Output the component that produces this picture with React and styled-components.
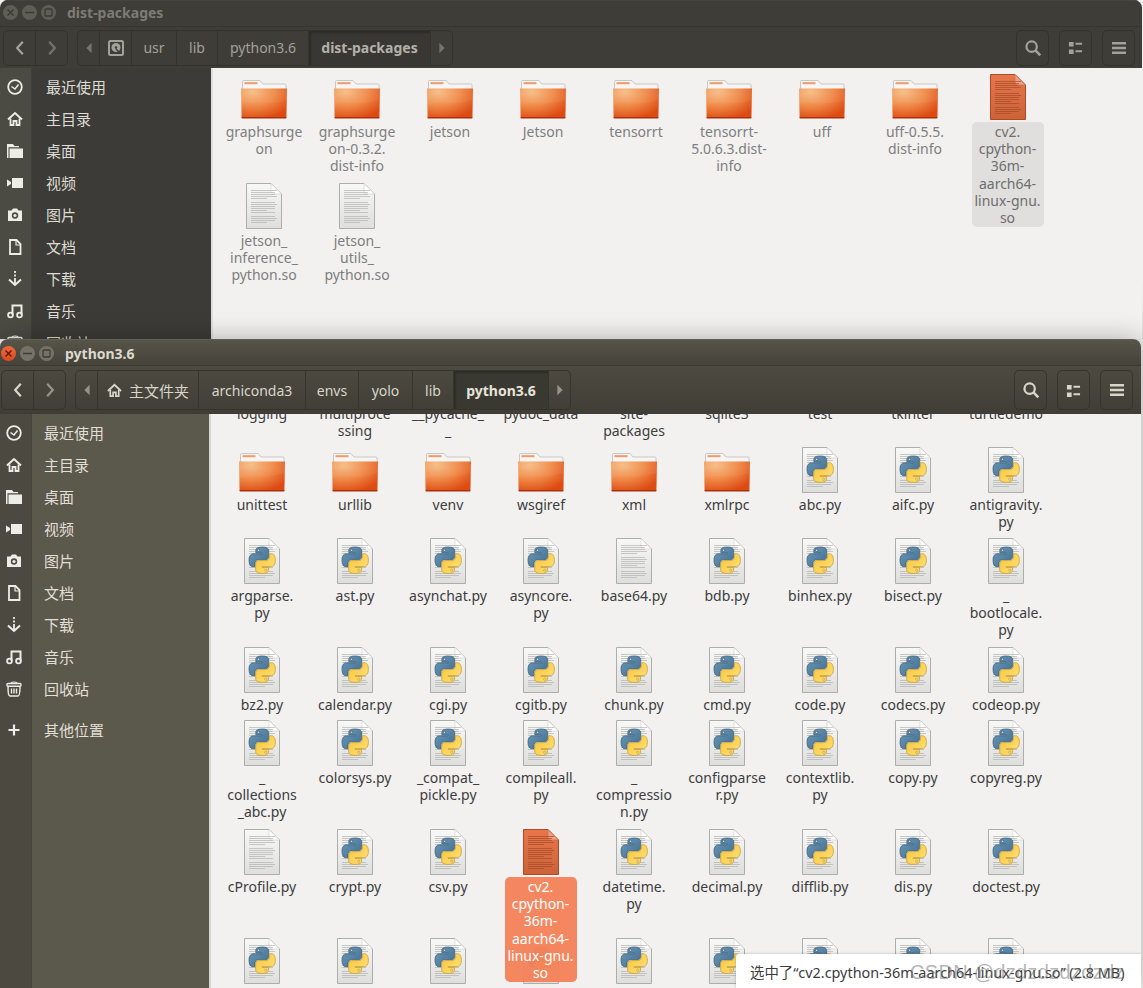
import React from 'react';
import styled, { createGlobalStyle } from 'styled-components';

const GlobalStyle = createGlobalStyle`
  html, body {
    margin: 0;
    padding: 0;
    background: #e6e6e4;
  }
  * {
    box-sizing: border-box;
  }
`;

const FONT = `"Noto Sans", "Noto Sans CJK SC", sans-serif`;

// ============================================
// STYLED COMPONENTS
// ============================================

const Desktop = styled.div`
  width: 1143px;
  height: 988px;
  overflow: hidden;
  display: flex;
  flex-direction: column;
  position: relative;
  font-family: ${FONT};
  background: linear-gradient(#f2f1f0 0, #f2f1f0 280px, #dcdcda 339px, #f0f0ee 340px);
`;

const Window = styled.div`
  display: flex;
  flex-direction: column;
  position: relative;
  overflow: hidden;
  width: ${(p) => (p.$active ? '1141px' : '1142px')};
  height: ${(p) => (p.$active ? '649px' : '339px')};
  flex: none;
  border-radius: 8px 8px 0 0;
  background: #f2f1f0;
  box-shadow: ${(p) => (p.$active ? '0 0 26px rgba(0, 0, 0, 0.28)' : 'none')};
`;

const TitleBar = styled.div`
  height: 26px;
  flex: none;
  display: flex;
  align-items: center;
  padding: ${(p) => (p.$active ? '2px 0 0 1px' : '0 0 3px 3px')};
  background: ${(p) => (p.$active ? 'linear-gradient(#575449, #45433a)' : '#3e3d38')};
  border-top: 1px solid ${(p) => (p.$active ? '#625f53' : '#45443f')};
`;

const WinButtons = styled.div`
  display: flex;
  gap: 4px;
  width: 64px;
`;

const WinButton = styled.div`
  width: 15px;
  height: 15px;
  border-radius: 50%;
  display: flex;
  align-items: center;
  justify-content: center;
  background: ${(p) => (p.$close ? 'linear-gradient(#f0693a, #dc4a20)' : p.$active ? '#75726a' : '#5e5d56')};
  color: ${(p) => (p.$close ? '#5c1c08' : p.$active ? '#3f3d36' : '#3a3935')};
`;

const Title = styled.div`
  font-size: 14px;
  font-weight: 700;
  color: ${(p) => (p.$active ? '#dcd9cf' : '#7d7c74')};
`;

const Toolbar = styled.div`
  height: ${(p) => (p.$active ? '49px' : '42px')};
  flex: none;
  display: flex;
  align-items: center;
  padding: ${(p) => (p.$active ? '0 8px 0 1px' : '0 7px 0 3px')};
  background: ${(p) => (p.$active ? 'linear-gradient(#4d4b41, #3f3d35)' : '#3e3d38')};
  border-top: 1px solid ${(p) => (p.$active ? '#3b3a32' : '#36352f')};
  color: ${(p) => (p.$active ? '#d8d5cb' : '#a3a199')};
`;

const Group = styled.div`
  display: flex;
  align-items: stretch;
  height: ${(p) => (p.$active ? '40px' : '36px')};
  border: 1px solid ${(p) => (p.$active ? '#35342d' : '#33322d')};
  border-radius: 5px;
  overflow: hidden;
  margin-left: ${(p) => p.$gap || 0}px;
`;

const Crumb = styled.div`
  width: ${(p) => p.$w}px;
  display: flex;
  align-items: center;
  justify-content: center;
  gap: 7px;
  font-size: 14px;
  white-space: nowrap;
  font-weight: ${(p) => (p.$current ? 700 : 400)};
  color: ${(p) => (p.$current ? (p.$active ? '#e6e3da' : '#b4b2a9') : 'inherit')};
  background: ${(p) => (p.$current ? (p.$active ? '#3a3931' : '#383733') : 'transparent')};
  border-left: ${(p) => (p.$first ? 'none' : `1px solid ${p.$active ? '#35342d' : '#33322d'}`)};
  box-shadow: ${(p) => (p.$current ? 'inset 2px 2px 2px rgba(0, 0, 0, 0.22)' : 'none')};

  svg {
    opacity: ${(p) => (p.$dim ? 0.55 : 1)};
  }
`;

const HomeLabel = styled.span`
  font-size: 15px;
`;

const Spacer = styled.div`
  flex: 1;
`;

const Body = styled.div`
  flex: 1;
  min-height: 0;
  display: flex;
`;

const Sidebar = styled.div`
  width: ${(p) => (p.$active ? '211px' : '213px')};
  flex: none;
  padding-top: 3px;
  background: linear-gradient(90deg,
    ${(p) => (p.$active ? '#4c4a40' : '#4b4a43')} 0, ${(p) => (p.$active ? '#4c4a40' : '#4b4a43')} 31px,
    ${(p) => (p.$active ? '#45433a' : '#403f3a')} 31px, ${(p) => (p.$active ? '#45433a' : '#403f3a')} 32px,
    ${(p) => (p.$active ? '#5b584c' : '#3c3b37')} 32px);
  border-right: 2px solid ${(p) => (p.$active ? '#d6d5d2' : '#e0dfdd')};
`;

const Place = styled.div`
  height: 32px;
  display: flex;
  align-items: center;
  margin-top: ${(p) => (p.$other ? '9px' : 0)};
`;

const PlaceIcon = styled.div`
  width: 32px;
  display: flex;
  justify-content: center;
  padding-right: ${(p) => (p.$active ? '4px' : '3px')};
  color: #eeece6;
`;

const PlaceName = styled.div`
  margin: -2px 0 0 ${(p) => (p.$active ? '12px' : '14px')};
  font-size: 15px;
  color: ${(p) => (p.$active ? '#e2dfd6' : '#dddbd3')};
`;

const Content = styled.div`
  flex: 1;
  min-width: 0;
  overflow: hidden;
  position: relative;
`;

const FileGrid = styled.div`
  display: grid;
  grid-template-columns: repeat(9, 93px);
  align-items: start;
  padding-left: 4.5px;
  margin-top: ${(p) => p.$scroll}px;
`;

const FileItem = styled.div`
  position: relative;
  display: flex;
  flex-direction: column;
  align-items: center;
  padding-bottom: ${(p) => 4 + p.$lines}px;
  min-height: ${(p) => (p.$selected ? '109px' : 0)};
`;

const IconBox = styled.div`
  height: 48px;
  display: flex;
  align-items: flex-end;
  justify-content: center;
`;

const FileName = styled.div`
  width: 78px;
  margin-top: 3px;
  font-size: 14px;
  line-height: 17px;
  text-align: center;
  white-space: pre-line;
  color: ${(p) => (p.$active ? '#3d3d3d' : '#7e7e7e')};
`;

const SelectedName = styled.div`
  position: absolute;
  z-index: 2;
  top: 50px;
  left: 10px;
  width: 72px;
  height: 105px;
  padding-top: 1px;
  border-radius: 5px;
  font-size: 14px;
  line-height: 17.2px;
  text-align: center;
  white-space: pre-line;
  color: ${(p) => (p.$active ? '#ffffff' : '#6e6e6e')};
  background: ${(p) => (p.$active ? 'rgba(244, 130, 88, 0.96)' : '#e0dfdd')};
`;

const Toast = styled.div`
  position: absolute;
  z-index: 3;
  right: 0;
  bottom: 0;
  width: 405px;
  height: 34px;
  padding-left: 14px;
  display: flex;
  align-items: center;
  font-size: 14.4px;
  white-space: nowrap;
  color: #3c3c3c;
  background: #ffffff;
  border-top-left-radius: 3px;
  box-shadow: 0 0 3px rgba(0, 0, 0, 0.25);
`;

const Watermark = styled.div`
  position: absolute;
  z-index: 4;
  left: 910px;
  top: 959px;
  font-family: "Liberation Sans", sans-serif;
  font-size: 20px;
  letter-spacing: 0.3px;
  line-height: 26px;
  white-space: nowrap;
  color: rgba(110, 110, 110, 0.5);
`;

// ============================================
// ICONS
// ============================================

const Stroke = ({ size = 16, width = 2, children }) => (
  <svg width={size} height={size} viewBox="0 0 16 16" fill="none" stroke="currentColor" strokeWidth={width}>
    {children}
  </svg>
);

const Fill = ({ size = 16, children }) => (
  <svg width={size} height={size} viewBox="0 0 16 16" fill="currentColor">
    {children}
  </svg>
);

const ChevronLeft = () => <Stroke size={18}><path d="M10.5 2.5 5.5 8l5 5.500" /></Stroke>;
const ChevronRight = () => <Stroke size={18}><path d="M5.5 2.500 10.500 8l-5 5.500" /></Stroke>;
const ArrowLeft = () => <Fill size={14}><path d="M11 2v12L5 8z" /></Fill>;
const ArrowRight = () => <Fill size={14}><path d="M5 2v12l6-6z" /></Fill>;

const Disk = () => (
  <svg width="16" height="16" viewBox="0 0 16 16">
    <rect x="1" y="1" width="14" height="14" rx="1.500" fill="none" stroke="currentColor" strokeWidth="2" />
    <circle cx="8" cy="7.500" r="4.500" fill="currentColor" />
    <circle cx="8" cy="7.500" r="1.300" fill="#3e3d38" />
    <path d="m8 9 4 4" stroke="#3e3d38" strokeWidth="1.500" />
  </svg>
);

const Home = ({ size = 16 }) => (
  <svg width={size} height={size} viewBox="0 0 16 16" fill="none" stroke="currentColor" strokeWidth="2">
    <path d="M1 8.500 8 2l7 6.500" />
    <path d="M3.500 7.500V14h3v-4h3v4h3V7.500" strokeWidth="1.800" />
  </svg>
);

const Search = () => (
  <Stroke size={18} width={2}>
    <circle cx="6.800" cy="6.800" r="4.600" />
    <path d="m10.200 10.200 4.300 4.300" strokeWidth="2.200" />
  </Stroke>
);

const ListView = () => (
  <Fill size={15}>
    <path d="M1 2h5v5H1zM1 10h5v5H1zM8 3h7v2H8zM8 11h7v2H8z" />
  </Fill>
);

const Menu = () => (
  <Fill size={16}>
    <path d="M1 2h14v2.500H1zM1 6.800h14v2.500H1zM1 11.500h14V14H1z" />
  </Fill>
);

const Clock = () => (
  <Stroke>
    <circle cx="8" cy="8" r="6.800" strokeWidth="1.800" />
    <path d="M4.500 7.500 8 10l3.500-4.500" strokeWidth="1.500" />
  </Stroke>
);

const Folder = () => (
  <Fill>
    <path d="M0 1h6l1.500 2H12v1.200H1.500V15H0z" />
    <path d="M2.500 5.500H16V15H2.500z" />
  </Fill>
);

const Video = () => (
  <Fill>
    <path d="M5 3h11v10H5zM0 4.500 4 7v2l-4 2.500z" />
  </Fill>
);

const Camera = () => (
  <svg width="16" height="16" viewBox="0 0 16 16">
    <path d="M1 3.500h3.500L6 1.500h4l1.500 2H15V14H1z" fill="currentColor" />
    <circle cx="8" cy="8.500" r="3.200" fill="#4b4a43" />
    <circle cx="8" cy="8.500" r="1.600" fill="currentColor" />
  </svg>
);

const Document = () => (
  <Stroke>
    <path d="M3 1h6.500L13.500 5v10H3z" strokeWidth="1.800" />
    <path d="M9 1v5h4.500" strokeWidth="1.200" />
  </Stroke>
);

const Download = () => (
  <Stroke>
    <path d="M8 0v2M8 3.500v2M8 7v6" strokeWidth="1.800" />
    <path d="M2 8.500 8 14l6-5.500" strokeWidth="2" />
  </Stroke>
);

const Music = () => (
  <Stroke>
    <circle cx="3.500" cy="12" r="2.400" strokeWidth="1.800" />
    <circle cx="12.500" cy="12" r="2.400" strokeWidth="1.800" />
    <path d="M5.500 11.500V2.500h9v9" strokeWidth="2" />
  </Stroke>
);

const Trash = () => (
  <Stroke>
    <rect x="1" y="2.500" width="14" height="2.800" rx="1" strokeWidth="1.400" />
    <path d="M2 5.500c0 6 .5 9.500 2 9.500h8c1.500 0 2-3.500 2-9.500M5.500 7.500v5M8 7.500v5M10.500 7.500v5" strokeWidth="1.400" />
    <path d="M5 2.500C5 1.200 6 1 8 1s3 .2 3 1.500" strokeWidth="1.200" />
  </Stroke>
);

const Plus = () => <Stroke size={16} width={2.200}><path d="M8 2.500v11M2.500 8h11" /></Stroke>;

const Cross = () => (
  <svg width="9" height="9" viewBox="0 0 9 9" fill="none" stroke="currentColor" strokeWidth="1.400">
    <path d="m1.500 1.500 6 6M7.500 1.500l-6 6" />
  </svg>
);

const Minus = () => (
  <svg width="9" height="9" viewBox="0 0 9 9" stroke="currentColor" strokeWidth="1.400">
    <path d="M0 4.500h9" />
  </svg>
);

const Square = () => (
  <svg width="9" height="9" viewBox="0 0 9 9" fill="none" stroke="currentColor" strokeWidth="1.300">
    <rect x="1" y="1" width="7" height="7" rx="1" />
  </svg>
);

// folder icon of the Ubuntu theme, 46x38
const FolderIcon = () => (
  <svg width="46" height="39" viewBox="0 0 46 39" style={{ marginBottom: 1 }}>
    <defs>
      <radialGradient id="folderFront" cx="0.25" cy="0.12" r="0.95">
        <stop offset="0" stopColor="#f6bd85" />
        <stop offset="0.5" stopColor="#f08a48" />
        <stop offset="1" stopColor="#dd4a12" />
      </radialGradient>
    </defs>
    <path d="M1.500 9V1.500Q1.500 .5 2.500 .5H19L22 4h22q1 0 1 1v5H1.500z" fill="#f6f5f3" stroke="#bdbcb9" strokeWidth="0.800" />
    <rect x="3.500" y="2.200" width="13" height="2" fill="#ee9a6a" />
    <path d="M0 8.500h46l-.6 29.500H.6z" fill="url(#folderFront)" />
    <path d="M0 8.500h46l-.2 11C30 27 12 21 .2 25z" fill="#ffffff" opacity="0.05" />
    <path d="M.6 37h44.800l-.2 1.500H.8z" fill="#a8320c" />
  </svg>
);

const TextLines = ({ color }) => (
  <g fill={color}>
    {[7, 9, 11, 13, 15, 19, 21, 23, 25, 27, 29, 33, 35, 37, 39].map((y, i) => (
      <rect key={y} x="5" y={y} width={i % 5 === 4 ? 16 : i % 3 === 0 ? 26 : 24} height="0.700" />
    ))}
  </g>
);

const DocIcon = ({ children }) => (
  <svg width="36" height="46" viewBox="0 0 36 46">
    <defs>
      <linearGradient id="docPage" x1="0" y1="0" x2="0" y2="1">
        <stop offset="0" stopColor="#f8f8f6" />
        <stop offset="1" stopColor="#dededc" />
      </linearGradient>
    </defs>
    <path d="M.5.500H25L35.500 11v34.500H.5z" fill="url(#docPage)" stroke="#adadab" />
    <path d="M25 .5V8q0 3 3 3h7.500z" fill="#ffffff" stroke="#cfcfcd" strokeWidth="0.600" />
    <TextLines color="#b4b4b2" />
    {children}
  </svg>
);

const PyIcon = () => (
  <DocIcon>
    <defs>
      <linearGradient id="pyBlue" x1="0" y1="0" x2="1" y2="1">
        <stop offset="0" stopColor="#6f9ab8" />
        <stop offset="1" stopColor="#3f6d91" />
      </linearGradient>
      <linearGradient id="pyYellow" x1="0" y1="0" x2="1" y2="1">
        <stop offset="0" stopColor="#ffe27a" />
        <stop offset="1" stopColor="#f7c53c" />
      </linearGradient>
    </defs>
    <g transform="translate(5 9) scale(0.2400)">
      <path
        d="M54.900 0C26.900 0 28.600 12.200 28.600 12.200v12.600h26.700v3.800H18S0 26.500 0 54.800c0 28.300 15.700 27.300 15.700 27.300h9.400V69s-.5-15.700 15.500-15.700h26.600s15 .2 15-14.500V14.500S84.500 0 54.900 0zM40.100 8.500a4.800 4.800 0 1 1 0 9.600 4.800 4.800 0 0 1 0-9.600z"
        fill="url(#pyBlue)" stroke="#3a5f7c" strokeWidth="3" fillRule="evenodd"
      />
      <path
        transform="rotate(180 55 55)"
        d="M54.900 0C26.900 0 28.600 12.200 28.600 12.200v12.600h26.700v3.800H18S0 26.500 0 54.800c0 28.300 15.700 27.300 15.700 27.300h9.400V69s-.5-15.700 15.500-15.700h26.600s15 .2 15-14.500V14.500S84.500 0 54.900 0zM40.100 8.500a4.800 4.800 0 1 1 0 9.600 4.800 4.800 0 0 1 0-9.600z"
        fill="url(#pyYellow)" stroke="#c99a28" strokeWidth="3" fillRule="evenodd"
      />
    </g>
  </DocIcon>
);

const SoIcon = () => (
  <svg width="36" height="46" viewBox="0 0 36 46">
    <defs>
      <linearGradient id="soPage" x1="0" y1="0" x2="0" y2="1">
        <stop offset="0" stopColor="#e8764a" />
        <stop offset="1" stopColor="#cc6238" />
      </linearGradient>
    </defs>
    <path d="M.5.500H25L35.500 11v34.500H.5z" fill="url(#soPage)" stroke="#b04a26" />
    <path d="M25 .5V8q0 3 3 3h7.500z" fill="#f0a080" stroke="#c86a45" strokeWidth="0.600" />
    <TextLines color="#a34d2a" />
  </svg>
);

const FILE_ICONS = { f: FolderIcon, d: DocIcon, p: PyIcon, s: SoIcon };

// ============================================
// DATA
// ============================================

const PLACES = [
  [Clock, '最近使用'],
  [Home, '主目录'],
  [Folder, '桌面'],
  [Video, '视频'],
  [Camera, '图片'],
  [Document, '文档'],
  [Download, '下载'],
  [Music, '音乐'],
  [Trash, '回收站'],
];

const SO_NAME = 'cv2.\ncpython-\n36m-\naarch64-\nlinux-gnu.\nso';

const TOP_FILES = [
  ['f', 'graphsurge\non'],
  ['f', 'graphsurge\non-0.3.2.\ndist-info'],
  ['f', 'jetson'],
  ['f', 'Jetson'],
  ['f', 'tensorrt'],
  ['f', 'tensorrt-\n5.0.6.3.dist-\ninfo'],
  ['f', 'uff'],
  ['f', 'uff-0.5.5.\ndist-info'],
  ['s', SO_NAME, true],
  ['d', 'jetson_\ninference_\npython.so'],
  ['d', 'jetson_\nutils_\npython.so'],
];

const BOTTOM_FILES = [
  ['f', 'logging'],
  ['f', 'multiproce\nssing'],
  ['f', '__pycache_\n_'],
  ['f', 'pydoc_data'],
  ['f', 'site-\npackages'],
  ['f', 'sqlite3'],
  ['f', 'test'],
  ['f', 'tkinter'],
  ['f', 'turtledemo'],
  ['f', 'unittest'],
  ['f', 'urllib'],
  ['f', 'venv'],
  ['f', 'wsgiref'],
  ['f', 'xml'],
  ['f', 'xmlrpc'],
  ['p', 'abc.py'],
  ['p', 'aifc.py'],
  ['p', 'antigravity.\npy'],
  ['p', 'argparse.\npy'],
  ['p', 'ast.py'],
  ['p', 'asynchat.py'],
  ['p', 'asyncore.\npy'],
  ['d', 'base64.py'],
  ['p', 'bdb.py'],
  ['p', 'binhex.py'],
  ['p', 'bisect.py'],
  ['p', '_\nbootlocale.\npy'],
  ['p', 'bz2.py'],
  ['p', 'calendar.py'],
  ['p', 'cgi.py'],
  ['p', 'cgitb.py'],
  ['p', 'chunk.py'],
  ['p', 'cmd.py'],
  ['p', 'code.py'],
  ['p', 'codecs.py'],
  ['p', 'codeop.py'],
  ['p', '_\ncollections\n_abc.py'],
  ['p', 'colorsys.py'],
  ['p', '_compat_\npickle.py'],
  ['p', 'compileall.\npy'],
  ['p', '_\ncompressio\nn.py'],
  ['p', 'configparse\nr.py'],
  ['p', 'contextlib.\npy'],
  ['p', 'copy.py'],
  ['p', 'copyreg.py'],
  ['d', 'cProfile.py'],
  ['p', 'crypt.py'],
  ['p', 'csv.py'],
  ['s', SO_NAME, true],
  ['p', 'datetime.\npy'],
  ['p', 'decimal.py'],
  ['p', 'difflib.py'],
  ['p', 'dis.py'],
  ['p', 'doctest.py'],
  ...Array.from({ length: 9 }, () => ['p', '']),
];

// ============================================
// COMPONENT
// ============================================

function FileManager({ active, title, crumbs, files, scroll, children }) {
  return (
    <Window $active={active}>
      <TitleBar $active={active}>
        <WinButtons>
          <WinButton $active={active} $close={active}><Cross /></WinButton>
          <WinButton $active={active}><Minus /></WinButton>
          <WinButton $active={active}><Square /></WinButton>
        </WinButtons>
        <Title $active={active}>{title}</Title>
      </TitleBar>
      <Toolbar $active={active}>
        <Group $active={active}>
          <Crumb $first $w={31}><ChevronLeft /></Crumb>
          <Crumb $active={active} $w={32} $dim><ChevronRight /></Crumb>
        </Group>
        <Group $active={active} $gap={9}>
          <Crumb $first $w={21} $dim><ArrowLeft /></Crumb>
          {crumbs.map((c) => (
            <Crumb key={c.w} $active={active} $w={c.w} $current={c.current}>
              {c.icon}
              {c.label && (c.icon && active ? <HomeLabel>{c.label}</HomeLabel> : c.label)}
            </Crumb>
          ))}
          <Crumb $active={active} $w={22} $dim><ArrowRight /></Crumb>
        </Group>
        <Spacer />
        <Group $active={active}><Crumb $first $w={31}><Search /></Crumb></Group>
        <Group $active={active} $gap={10}><Crumb $first $w={31}><ListView /></Crumb></Group>
        <Group $active={active} $gap={10}><Crumb $first $w={31}><Menu /></Crumb></Group>
      </Toolbar>
      <Body>
        <Sidebar $active={active}>
          {PLACES.map(([Icon, name]) => (
            <Place key={name}>
              <PlaceIcon $active={active}><Icon /></PlaceIcon>
              <PlaceName $active={active}>{name}</PlaceName>
            </Place>
          ))}
          <Place $other>
            <PlaceIcon $active={active}><Plus /></PlaceIcon>
            <PlaceName $active={active}>其他位置</PlaceName>
          </Place>
        </Sidebar>
        <Content>
          <FileGrid $scroll={scroll}>
            {files.map(([type, name, selected], i) => {
              const Icon = FILE_ICONS[type];
              return (
                <FileItem key={i} $lines={name.split('\n').length} $selected={selected}>
                  <IconBox><Icon /></IconBox>
                  {selected ? (
                    <SelectedName $active={active}>{name}</SelectedName>
                  ) : (
                    <FileName $active={active}>{name}</FileName>
                  )}
                </FileItem>
              );
            })}
          </FileGrid>
          {children}
        </Content>
      </Body>
    </Window>
  );
}

const TOP_CRUMBS = [
  { w: 32, icon: <Disk /> },
  { w: 45, label: 'usr' },
  { w: 41, label: 'lib' },
  { w: 91, label: 'python3.6' },
  { w: 122, label: 'dist-packages', current: true },
];

const BOTTOM_CRUMBS = [
  { w: 101, icon: <Home size={15} />, label: '主文件夹' },
  { w: 107, label: 'archiconda3' },
  { w: 53, label: 'envs' },
  { w: 54, label: 'yolo' },
  { w: 41, label: 'lib' },
  { w: 95, label: 'python3.6', current: true },
];

export default function App() {
  return (
    <Desktop>
      <GlobalStyle />
      <FileManager title="dist-packages" crumbs={TOP_CRUMBS} files={TOP_FILES} scroll={4} />
      <FileManager active title="python3.6" crumbs={BOTTOM_CRUMBS} files={BOTTOM_FILES} scroll={-60}>
        <Toast>选中了“cv2.cpython-36m-aarch64-linux-gnu.so” (2.8 MB)</Toast>
      </FileManager>
      <Watermark>CSDN @dzdzdzdzdzdz</Watermark>
    </Desktop>
  );
}
